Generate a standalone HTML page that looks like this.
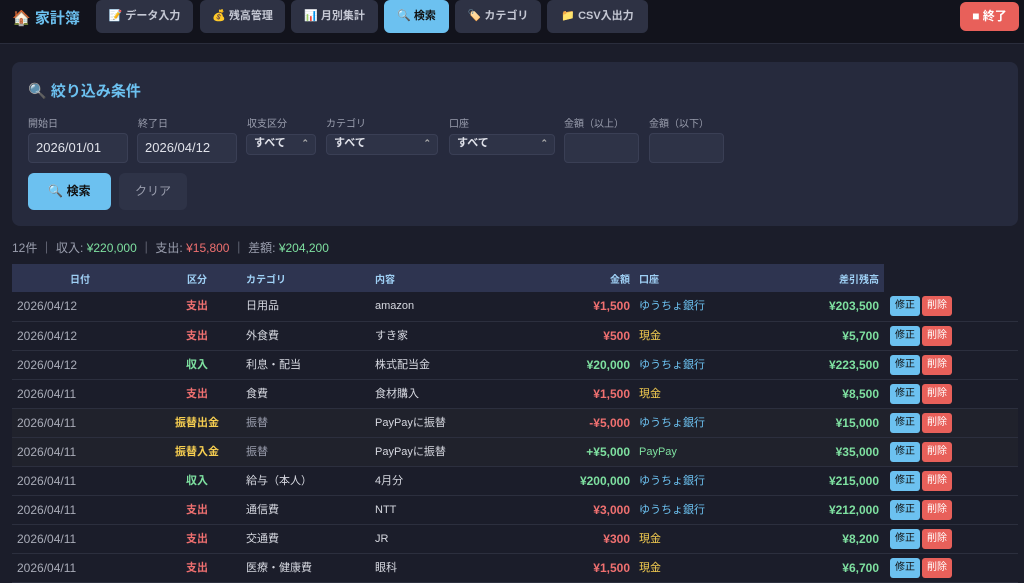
<!DOCTYPE html>
<html><head><meta charset="utf-8"><style>
*{box-sizing:border-box;margin:0;padding:0}
body{width:1024px;height:575px;overflow:hidden;background:#1b1d2a;font-family:"Liberation Sans","Noto Sans CJK JP",sans-serif;color:#d6d8e0;font-size:11px}
.hdr{height:44px;background:#12131c;border-bottom:1px solid #2a2d3c;position:relative}
.logo{position:absolute;left:12px;top:7px;font-size:15px;font-weight:bold;color:#6cc1f0}
.nav{position:absolute;top:0;height:33px;background:#2e3244;border-radius:6px;color:#c5c8d4;font-size:11px;font-weight:bold;line-height:33px;text-align:center}
.nav.on{background:#6cc1f0;color:#111}
.quit{position:absolute;left:960px;top:2px;width:59px;height:29px;background:#e8605a;border-radius:6px;color:#fff;font-weight:bold;line-height:29px;text-align:center;font-size:12px}
.panel{position:absolute;left:12px;top:62px;width:1006px;height:164px;background:#262a3d;border-radius:8px}
.ttl{position:absolute;left:16px;top:18px;font-size:15px;font-weight:bold;color:#6cc1f0}
.lbl{position:absolute;top:53px;font-size:10px;color:#9a9eae}
.inp{position:absolute;top:71px;height:30px;background:#2e3347;border:1px solid #3a3f55;border-radius:4px;padding-left:7px;line-height:28px;font-size:13px;color:#e0e2ea}
.sel{position:absolute;top:72px;height:21px;background:#2e3347;border:1px solid #3a3f55;border-radius:4px;padding-left:7px;line-height:17px;font-size:11px;font-weight:bold;color:#e0e2ea}
.sel:after{content:"⌃";position:absolute;right:6px;top:0;font-size:9px;color:#aaa}
.btn{position:absolute;top:111px;height:37px;border-radius:6px;line-height:37px;text-align:center;font-size:12px}
.sum{position:absolute;left:12px;top:239px;font-size:12px;color:#9a9eae}
.g{color:#7ee0a0}.r{color:#f07070}.y{color:#f5cd50}.b{color:#6cc1f0}
table{position:absolute;left:12px;top:264px;border-collapse:collapse;width:1006px}
th{background:#2e3450;height:28px;font-size:10px;color:#9fd0f5;font-weight:bold}
td{height:29px;border-bottom:1px solid #2c2f3e;font-size:11px;vertical-align:middle;line-height:14px;padding-top:0;padding-bottom:0}
td:first-child{font-size:12px}
td.rt{font-size:12px}
tr.t td{background:#20222c}
.c{text-align:center}.rt{text-align:right}.bold{font-weight:bold}
.e,.d{display:inline-block;width:30px;height:20px;border-radius:3px;line-height:20px;text-align:center;font-size:10px;color:#111;vertical-align:middle}
.e{background:#6cc1f0}.d{background:#e8605a;color:#fff;margin-left:2px}
td.a{padding-left:6px}
</style></head><body>
<div class="hdr">
<div class="logo">🏠 家計簿</div>
<div class="nav" style="left:96px;width:97px">📝 データ入力</div>
<div class="nav" style="left:200px;width:85px">💰 残高管理</div>
<div class="nav" style="left:291px;width:87px">📊 月別集計</div>
<div class="nav on" style="left:384px;width:65px">🔍 検索</div>
<div class="nav" style="left:455px;width:86px">🏷️ カテゴリ</div>
<div class="nav" style="left:547px;width:101px">📁 CSV入出力</div>
<div class="quit">■ 終了</div>
</div>
<div class="panel">
<div class="ttl">🔍 絞り込み条件</div>
<div class="lbl" style="left:16px">開始日</div>
<div class="lbl" style="left:126px">終了日</div>
<div class="lbl" style="left:235px">収支区分</div>
<div class="lbl" style="left:314px">カテゴリ</div>
<div class="lbl" style="left:437px">口座</div>
<div class="lbl" style="left:552px">金額（以上）</div>
<div class="lbl" style="left:637px">金額（以下）</div>
<div class="inp" style="left:16px;width:100px">2026/01/01</div>
<div class="inp" style="left:125px;width:100px">2026/04/12</div>
<div class="sel" style="left:234px;width:70px">すべて</div>
<div class="sel" style="left:314px;width:112px">すべて</div>
<div class="sel" style="left:437px;width:106px">すべて</div>
<div class="inp" style="left:552px;width:75px"></div>
<div class="inp" style="left:637px;width:75px"></div>
<div class="btn" style="left:16px;width:83px;background:#6cc1f0;color:#111;font-weight:bold">🔍 検索</div>
<div class="btn" style="left:107px;width:68px;background:#2e3347;color:#9a9eae">クリア</div>
</div>
<div class="sum">12件 ｜ 収入: <span class="g">¥220,000</span> ｜ 支出: <span class="r">¥15,800</span> ｜ 差額: <span class="g">¥204,200</span></div>
<table>
<tr><th style="width:136px">日付</th><th style="width:98px">区分</th><th style="width:129px;text-align:left">カテゴリ</th><th style="width:144px;text-align:left">内容</th><th style="width:111px;text-align:right">金額</th><th style="width:90px;text-align:left;padding-left:9px">口座</th><th style="width:164px;text-align:right;padding-right:5px">差引残高</th><th style="background:transparent"></th></tr>
<tr><td style="padding-left:5px;color:#a9acb8">2026/04/12</td><td class="c bold r">支出</td><td>日用品</td><td>amazon</td><td class="rt bold r">¥1,500</td><td class="b" style="padding-left:9px">ゆうちょ銀行</td><td class="rt bold g" style="padding-right:5px">¥203,500</td><td class="a"><span class="e">修正</span><span class="d">削除</span></td></tr>
<tr><td style="padding-left:5px;color:#a9acb8">2026/04/12</td><td class="c bold r">支出</td><td>外食費</td><td>すき家</td><td class="rt bold r">¥500</td><td class="y" style="padding-left:9px">現金</td><td class="rt bold g" style="padding-right:5px">¥5,700</td><td class="a"><span class="e">修正</span><span class="d">削除</span></td></tr>
<tr><td style="padding-left:5px;color:#a9acb8">2026/04/12</td><td class="c bold g">収入</td><td>利息・配当</td><td>株式配当金</td><td class="rt bold g">¥20,000</td><td class="b" style="padding-left:9px">ゆうちょ銀行</td><td class="rt bold g" style="padding-right:5px">¥223,500</td><td class="a"><span class="e">修正</span><span class="d">削除</span></td></tr>
<tr><td style="padding-left:5px;color:#a9acb8">2026/04/11</td><td class="c bold r">支出</td><td>食費</td><td>食材購入</td><td class="rt bold r">¥1,500</td><td class="y" style="padding-left:9px">現金</td><td class="rt bold g" style="padding-right:5px">¥8,500</td><td class="a"><span class="e">修正</span><span class="d">削除</span></td></tr>
<tr class="t"><td style="padding-left:5px;color:#a9acb8">2026/04/11</td><td class="c bold y">振替出金</td><td style="color:#9a9eae">振替</td><td>PayPayに振替</td><td class="rt bold r">-¥5,000</td><td class="b" style="padding-left:9px">ゆうちょ銀行</td><td class="rt bold g" style="padding-right:5px">¥15,000</td><td class="a"><span class="e">修正</span><span class="d">削除</span></td></tr>
<tr class="t"><td style="padding-left:5px;color:#a9acb8">2026/04/11</td><td class="c bold y">振替入金</td><td style="color:#9a9eae">振替</td><td>PayPayに振替</td><td class="rt bold g">+¥5,000</td><td class="g" style="padding-left:9px">PayPay</td><td class="rt bold g" style="padding-right:5px">¥35,000</td><td class="a"><span class="e">修正</span><span class="d">削除</span></td></tr>
<tr><td style="padding-left:5px;color:#a9acb8">2026/04/11</td><td class="c bold g">収入</td><td>給与（本人）</td><td>4月分</td><td class="rt bold g">¥200,000</td><td class="b" style="padding-left:9px">ゆうちょ銀行</td><td class="rt bold g" style="padding-right:5px">¥215,000</td><td class="a"><span class="e">修正</span><span class="d">削除</span></td></tr>
<tr><td style="padding-left:5px;color:#a9acb8">2026/04/11</td><td class="c bold r">支出</td><td>通信費</td><td>NTT</td><td class="rt bold r">¥3,000</td><td class="b" style="padding-left:9px">ゆうちょ銀行</td><td class="rt bold g" style="padding-right:5px">¥212,000</td><td class="a"><span class="e">修正</span><span class="d">削除</span></td></tr>
<tr><td style="padding-left:5px;color:#a9acb8">2026/04/11</td><td class="c bold r">支出</td><td>交通費</td><td>JR</td><td class="rt bold r">¥300</td><td class="y" style="padding-left:9px">現金</td><td class="rt bold g" style="padding-right:5px">¥8,200</td><td class="a"><span class="e">修正</span><span class="d">削除</span></td></tr>
<tr><td style="padding-left:5px;color:#a9acb8">2026/04/11</td><td class="c bold r">支出</td><td>医療・健康費</td><td>眼科</td><td class="rt bold r">¥1,500</td><td class="y" style="padding-left:9px">現金</td><td class="rt bold g" style="padding-right:5px">¥6,700</td><td class="a"><span class="e">修正</span><span class="d">削除</span></td></tr>
</table>
</body></html>
